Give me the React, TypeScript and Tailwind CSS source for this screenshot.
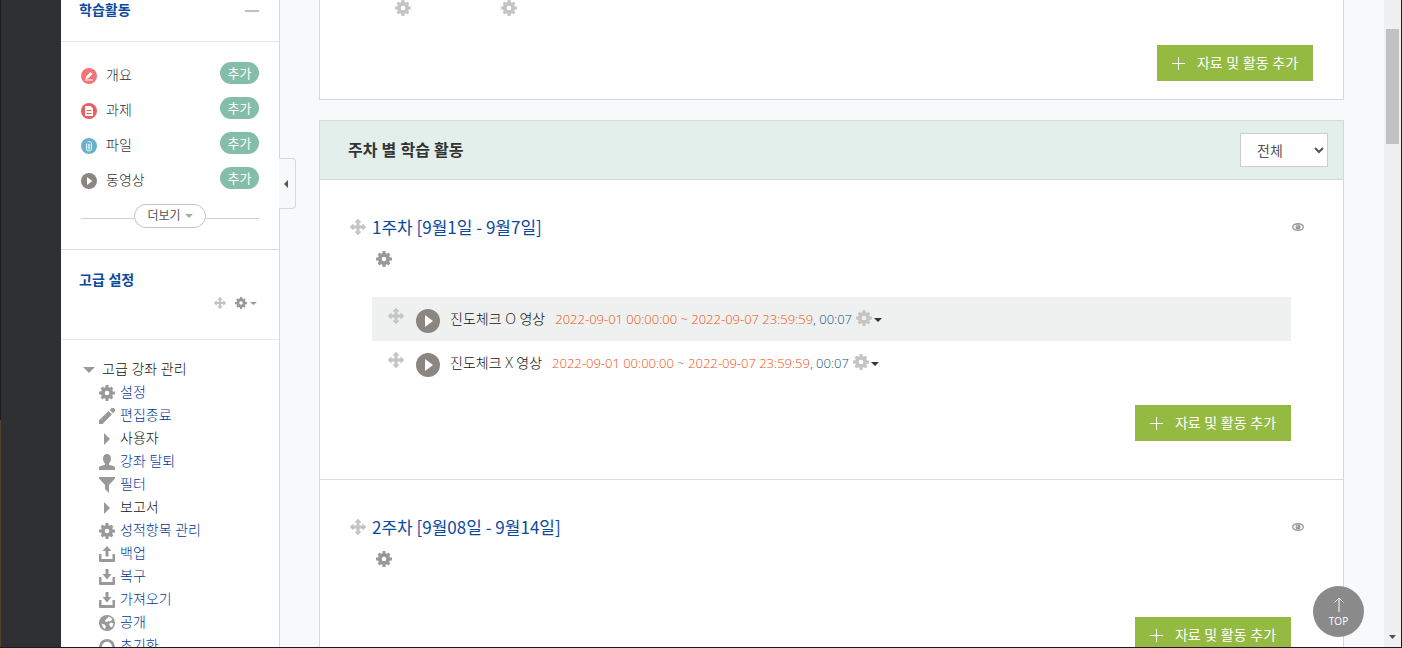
import type { ReactNode } from "react";

type IconProps = { className?: string };

function Gear({ className = "size-4 text-[#999999]" }: IconProps) {
  return (
    <svg viewBox="0 0 16 16" className={className} fill="none" stroke="currentColor" aria-hidden="true">
      <circle cx="8" cy="8" r="4.200" strokeWidth="3.800" />
      <path d="M8 0v4M8 12v4M0 8h4M12 8h4" strokeWidth="3" />
      <path d="M2.600 2.600l2.400 2.400M11 11l2.400 2.400M13.400 2.600L11 5M5 11l-2.400 2.400" strokeWidth="3" />
    </svg>
  );
}

function Move({ className = "size-4 text-[#c4c4c4]" }: IconProps) {
  return (
    <svg viewBox="0 0 16 16" className={className} fill="currentColor" aria-hidden="true">
      <path d="M8 0l3 3.200H9.200v3.600h3.600V5L16 8l-3.200 3V9.200H9.200v3.600H11L8 16l-3-3.200h1.800V9.200H3.200V11L0 8l3.200-3v1.800h3.600V3.200H5z" stroke="currentColor" strokeWidth=".6" strokeLinejoin="round" />
    </svg>
  );
}

function Caret({ className = "" }: IconProps) {
  return (
    <svg viewBox="0 0 8 4" className={className} fill="currentColor" preserveAspectRatio="none" aria-hidden="true">
      <path d="M0 0h8L4 4z" />
    </svg>
  );
}

function Play({ className = "" }: IconProps) {
  return (
    <svg viewBox="0 0 24 24" className={className} aria-hidden="true">
      <circle cx="12" cy="12" r="12" fill="#8a8681" />
      <path d="M9 6v12l8-6z" fill="#fff" />
    </svg>
  );
}

function Outline() {
  return (
    <svg viewBox="0 0 16 16" className="size-4" aria-hidden="true">
      <circle cx="8" cy="8" r="8" fill="#f17576" />
      <path d="M5 8.600l4.500-4.500 2 2L7 10.500l-2.400.4zM4 11.600h8v1H4z" fill="#fff" />
    </svg>
  );
}

function Assignment() {
  return (
    <svg viewBox="0 0 16 16" className="size-4" aria-hidden="true">
      <circle cx="8" cy="8" r="8" fill="#e8605a" />
      <path d="M4 3h5.500L12 5.500V13H4z" fill="#fff" />
      <path d="M5.500 7.500h5M5.500 10.500h5" stroke="#e8605a" strokeWidth="1" />
    </svg>
  );
}

function FileClip() {
  return (
    <svg viewBox="0 0 16 16" className="size-4" aria-hidden="true">
      <circle cx="8" cy="8" r="8" fill="#6bb0cb" />
      <path
        d="M5.500 5.500v5.500a2.500 2 0 0 0 5 0V5a2.500 2 0 0 0-4-1M7.300 6v4.600a.7.700 0 0 0 1.400 0V5.500"
        fill="none"
        stroke="#e4f3f8"
        strokeWidth="1"
      />
    </svg>
  );
}

function Pencil() {
  return (
    <svg viewBox="0 0 16 16" className="size-4 text-[#999999]" fill="currentColor" aria-hidden="true">
      <path d="M0 12.200L9.600 3 13 6.300 3.600 16H0zM10.600 2l1.500-1.500a2 2 0 0 1 3.300 3.300L14 5.300z" />
    </svg>
  );
}

function Person() {
  return (
    <svg viewBox="0 0 16 16" className="size-4 text-[#999999]" fill="currentColor" aria-hidden="true">
      <path d="M8 0c2.500 0 4 1.800 4 4.500 0 2.200-.8 4-2 5v1.300l5 1.500c.7.300 1 .8 1 1.500V16H0v-2.200c0-.7.300-1.200 1-1.500l5-1.500V9.500c-1.200-1-2-2.800-2-5C4 1.800 5.500 0 8 0z" />
    </svg>
  );
}

function Funnel() {
  return (
    <svg viewBox="0 0 16 16" className="size-4 text-[#999999]" fill="currentColor" aria-hidden="true">
      <path d="M0 0h16v1.500L10 8v8l-4-4V8L0 1.500z" />
    </svg>
  );
}

function Triangle() {
  return (
    <svg viewBox="0 0 16 16" className="size-4 text-[#999999]" fill="currentColor" aria-hidden="true">
      <path d="M5 2v12l6-6z" />
    </svg>
  );
}

function Tray({ up = false }: { up?: boolean }) {
  return (
    <svg viewBox="0 0 16 16" className="size-4 text-[#999999]" fill="currentColor" aria-hidden="true">
      <path d="M0 8h2.500v5h11V8H16v6.500c0 1-.5 1.500-1.500 1.500h-13C.5 16 0 15.500 0 14.500z" />
      {up ? <path d="M8 0l4.500 5H9.500v5.500h-3V5h-3z" /> : <path d="M6.500 0h3v5h3L8 10.500 3.500 5h3z" />}
    </svg>
  );
}

function Globe() {
  return (
    <svg viewBox="0 0 16 16" className="size-4" aria-hidden="true">
      <circle cx="8" cy="8" r="8" fill="#999999" />
      <path d="M9.500 1.500l3 1.500.5 2-2.500 1.500-1-.5-1.500 1L6 6.500 7 4l1.500-.5zM10 9l2-1.500 2.500 1-1 3-1.500 1-1-1.500zM2.500 8.500l3 1 1.500 2L6 14l-2-1.500z" fill="#fff" />
    </svg>
  );
}

function Reset() {
  return (
    <svg viewBox="0 0 16 16" className="size-4 text-[#999999]" fill="none" aria-hidden="true">
      <path d="M3 13A6.500 6.500 0 1 1 13 13" stroke="currentColor" strokeWidth="2.800" />
    </svg>
  );
}

function Eye() {
  return (
    <svg viewBox="0 0 12 8" className="h-2 w-3" aria-hidden="true">
      <ellipse cx="6" cy="4" rx="5.300" ry="3.300" fill="#fff" stroke="#999" strokeWidth="1.400" />
      <circle cx="6" cy="4" r="2.500" fill="#999" />
      <circle cx="5.300" cy="3.200" r=".8" fill="#ddd" />
    </svg>
  );
}

const activityTypes: { label: string; icon: ReactNode }[] = [
  { label: "개요", icon: <Outline /> },
  { label: "과제", icon: <Assignment /> },
  { label: "파일", icon: <FileClip /> },
  { label: "동영상", icon: <Play className="size-4" /> },
];

const settings: { label: string; icon: ReactNode; branch?: boolean }[] = [
  { label: "설정", icon: <Gear /> },
  { label: "편집종료", icon: <Pencil /> },
  { label: "사용자", icon: <Triangle />, branch: true },
  { label: "강좌 탈퇴", icon: <Person /> },
  { label: "필터", icon: <Funnel /> },
  { label: "보고서", icon: <Triangle />, branch: true },
  { label: "성적항목 관리", icon: <Gear /> },
  { label: "백업", icon: <Tray up /> },
  { label: "복구", icon: <Tray /> },
  { label: "가져오기", icon: <Tray /> },
  { label: "공개", icon: <Globe /> },
  { label: "초기화", icon: <Reset /> },
];

function Sidebar() {
  return (
    <aside className="relative w-[219px] shrink-0 border-r border-[#d6d8db] bg-white">
      <section className="border-b border-[#d6d8db]">
        <header className="flex h-[42px] items-start justify-between border-b border-[#e6e8ea] pr-5 pl-[18px]">
          <h2 className="text-sm leading-5 font-bold text-[#0b4a9e]">학습활동</h2>
          <button type="button" aria-label="접기" className="flex h-[22px] items-center">
            <span className="h-[2px] w-[14px] bg-[#bfbfbf]" />
          </button>
        </header>
        <div className="px-5 pt-5">
          <ul>
            {activityTypes.map(({ label, icon }) => (
              <li key={label} className="flex h-[35px] items-start">
                <a href="#" className="flex h-7 items-center gap-[9px] text-sm font-light text-[#333333]">
                  {icon}
                  <span className="pb-0.5">{label}</span>
                </a>
                <button type="button" className="ml-auto h-[22px] w-[39px] rounded-full bg-[#84bda8] text-[13px] leading-[22px] text-white">
                  추가
                </button>
              </li>
            ))}
          </ul>
          <div className="mt-0.5 flex h-[45px] items-start">
            <span className="mt-[14px] h-px flex-1 bg-[#d0d0d0]" />
            <button type="button" className="flex h-6 w-[72px] items-center justify-center gap-1 rounded-full border border-[#c4c4c4] bg-white text-xs text-[#555555]">
              더보기
              <Caret className="h-1 w-2 text-[#aaaaaa]" />
            </button>
            <span className="mt-[14px] h-px flex-1 bg-[#d0d0d0]" />
          </div>
        </div>
      </section>

      <section>
        <header className="h-[90px] border-b border-[#e6e8ea] pt-5 pr-[22px] pl-[18px]">
          <h2 className="text-sm leading-5 font-bold text-[#0b4a9e]">고급 설정</h2>
          <div className="mt-[7px] flex items-center justify-end">
            <Move className="size-3 text-[#c4c4c4]" />
            <button type="button" aria-label="블록 설정" className="ml-[9px] flex items-center gap-[3px]">
              <Gear className="size-3 text-[#999999]" />
              <Caret className="h-[3px] w-[7px] text-[#999999]" />
            </button>
          </div>
        </header>
        <div className="px-[22px] pt-[18px]">
          <div className="flex h-[23px] items-center gap-[7px] text-sm font-light whitespace-nowrap text-[#111111]">
            <Caret className="h-[6px] w-3 text-[#999999]" />
            <span className="pb-0.5">고급 강좌 관리</span>
          </div>
          <ul className="pl-4">
            {settings.map(({ label, icon, branch }) => (
              <li key={label} className="h-[23px]">
                <a
                  href="#"
                  className={
                    branch
                      ? "flex h-full items-center gap-[5px] text-sm font-light whitespace-nowrap text-[#111111]"
                      : "flex h-full items-center gap-[5px] text-sm font-light whitespace-nowrap text-[#003a94]"
                  }
                >
                  {icon}
                  <span className="pb-0.5">{label}</span>
                </a>
              </li>
            ))}
          </ul>
        </div>
      </section>

      <button
        type="button"
        aria-label="사이드바 닫기"
        className="absolute top-[158px] left-full flex h-[51px] w-[17px] items-center justify-center rounded-r-[4px] border border-l-0 border-[#d6d8db] bg-[#f7f8fa] pr-0.5"
      >
        <svg viewBox="0 0 4 8" className="h-2 w-1" fill="#555" aria-hidden="true">
          <path d="M4 0v8L0 4z" />
        </svg>
      </button>
    </aside>
  );
}

function AddButton() {
  return (
    <button type="button" className="flex h-9 w-[156px] shrink-0 items-center justify-center gap-3 bg-[#94ba42] text-sm whitespace-nowrap text-white">
      <svg viewBox="0 0 13 13" className="size-[13px]" stroke="#fff" aria-hidden="true">
        <path d="M6.500 0v13M0 6.500h13" />
      </svg>
      자료 및 활동 추가
    </button>
  );
}

function Activity({ title, shaded = false }: { title: string; shaded?: boolean }) {
  return (
    <li className={shaded ? "flex h-11 items-center bg-[#eff1f1] pl-4" : "flex h-11 items-center pl-4"}>
      <Move className="mb-1.5 size-4 text-[#c4c4c4]" />
      <Play className="mt-1 ml-3 size-6" />
      <a href="#" className="ml-[10px] text-sm font-light whitespace-nowrap text-[#111111]">
        {title}
      </a>
      <span className="ml-[10px] pt-0.5 text-[13px] font-light whitespace-nowrap text-[#f04e0c]">
        2022-09-01 00:00:00 ~ 2022-09-07 23:59:59<span className="text-[#0b4f7c]">, 00:07</span>
      </span>
      <button type="button" aria-label="편집" className="ml-1 flex items-center gap-[2px] text-[#333333]">
        <Gear className="mb-0.5 size-4 text-[#c4c4c4]" />
        <Caret className="mt-0.5 h-1 w-2" />
      </button>
    </li>
  );
}

function Week({ title, children }: { title: string; children?: ReactNode }) {
  return (
    <section className="border-b border-[#dadcdd] pb-[38px]">
      <header className="mt-[35px] flex h-6 items-center pr-[39px] pl-[30px]">
        <Move />
        <h3 className="ml-[6px] font-['Noto_Sans_CJK_KR',sans-serif] text-[17px] leading-6 whitespace-nowrap text-[#0b4a9e]">
          <a href="#">{title}</a>
        </h3>
        <button type="button" aria-label="숨기기" className="ml-auto">
          <Eye />
        </button>
      </header>
      <div className="px-[52px]">
        <button type="button" aria-label="주차 설정" className="mt-3 ml-1 block">
          <Gear />
        </button>
        {children ? <ul className="mt-[30px]">{children}</ul> : <div className="h-[30px]" />}
        <div className="mt-5 flex justify-end">
          <AddButton />
        </div>
      </div>
    </section>
  );
}

export default function App() {
  return (
    <div className="flex h-screen overflow-hidden border-r border-b border-[#1c1c1e] bg-[#f7f9fb] font-['Open_Sans','Noto_Sans_CJK_KR',sans-serif]">
      <div className="flex w-[61px] shrink-0 bg-[#2f3034]">
        <div className="flex w-px flex-col bg-[#1c1c1e] pt-[420px]">
          <div className="flex-1 bg-[#54402a]" />
        </div>
      </div>
      <Sidebar />

      <main className="min-w-0 flex-1 pr-10 pl-[39px]">
        <section className="h-[100px] border-x border-b border-[#d6d9db] bg-white px-[30px]">
          <div className="flex gap-[90px] pl-[45px]">
            <Gear className="size-4 text-[#c4c4c4]" />
            <Gear className="size-4 text-[#c4c4c4]" />
          </div>
          <div className="mt-[29px] flex justify-end">
            <AddButton />
          </div>
        </section>

        <section className="mt-5 border border-[#d6d9db] bg-white">
          <header className="flex h-[59px] items-center justify-between border-b border-[#d6d9db] bg-[#e3efeb] pr-[15px] pl-7">
            <h2 className="text-base font-bold text-[#333333]">주차 별 학습 활동</h2>
            <select aria-label="주차 선택" className="h-[34px] w-[88px] border border-[#cccccc] bg-white pl-3 text-sm text-[#555555]">
              <option>전체</option>
            </select>
          </header>
          <Week title="1주차 [9월1일 - 9월7일]">
            <Activity title="진도체크 O 영상" shaded />
            <Activity title="진도체크 X 영상" />
          </Week>
          <Week title="2주차 [9월08일 - 9월14일]" />
        </section>
      </main>

      <div className="flex w-[17px] shrink-0 flex-col items-center bg-[#f0f0f0] pt-[29px] pb-2">
        <div className="h-[115px] w-[13px] bg-[#c1c1c1]" />
        <Caret className="mt-auto h-1 w-[7px] text-[#505050]" />
      </div>

      <a
        href="#"
        className="fixed right-[38px] bottom-[11px] flex size-[51px] flex-col items-center rounded-full bg-[#8a8a8b] pt-[11px] text-[10px] leading-[14px] text-white"
      >
        <svg viewBox="0 0 10 15" className="mb-0.5 h-[15px] w-[10px]" fill="none" stroke="#fff" aria-hidden="true">
          <path d="M5 15V1M.5 5.500L5 1l4.500 4.500" />
        </svg>
        TOP
      </a>
    </div>
  );
}
